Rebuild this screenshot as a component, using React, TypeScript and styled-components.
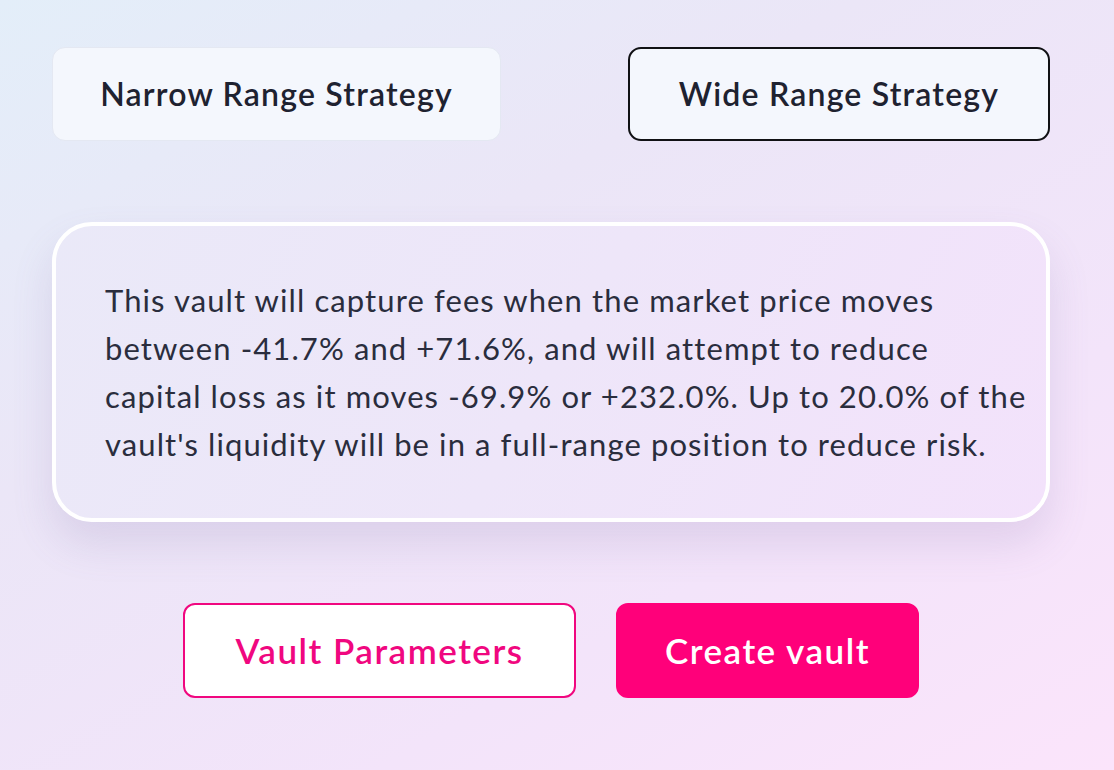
import React, { useState } from 'react';
import styled, { createGlobalStyle } from 'styled-components';

const GlobalStyle = createGlobalStyle`
  * {
    box-sizing: border-box;
  }
  html, body {
    margin: 0;
    padding: 0;
  }
  body {
    font-family: Lato, 'Open Sans', sans-serif;
    background: #eee8f8;
  }
`;

type Strategy = 'narrow' | 'wide';

const App: React.FC = () => {
  const [strategy, setStrategy] = useState<Strategy>('wide');

  return (
    <>
      <GlobalStyle />
      <Page>
        <StrategyRow>
          <StrategyButton
            $active={strategy === 'narrow'}
            $width={449}
            onClick={() => setStrategy('narrow')}
          >
            Narrow Range Strategy
          </StrategyButton>
          <StrategyButton
            $active={strategy === 'wide'}
            $width={422}
            onClick={() => setStrategy('wide')}
          >
            Wide Range Strategy
          </StrategyButton>
        </StrategyRow>

        <InfoCard>
          <InfoText>
            This vault will capture fees when the market price moves between -41.7% and
            +71.6%, and will attempt to reduce capital loss as it moves -69.9% or +232.0%.
            Up to 20.0% of the vault's liquidity will be in a full-range position to reduce
            risk.
          </InfoText>
        </InfoCard>

        <ActionRow>
          <ActionButton $variant="outline" $width={393}>
            Vault Parameters
          </ActionButton>
          <ActionButton $variant="solid" $width={303}>
            Create vault
          </ActionButton>
        </ActionRow>
      </Page>
    </>
  );
};

export default App;

const Page = styled.div`
  width: 1114px;
  height: 770px;
  overflow: hidden;
  padding: 47px 64px 0 52px;
  background: linear-gradient(150deg, #e3eef9 0%, #ebe6f7 35%, #f3e4fa 70%, #fbe4fb 100%);
  display: flex;
  flex-direction: column;
`;

const StrategyRow = styled.div`
  display: flex;
  justify-content: space-between;
  align-items: center;
`;

const StrategyButton = styled.button<{ $active: boolean; $width: number }>`
  width: ${(p) => p.$width}px;
  height: 94px;
  border-radius: 13px;
  background: #f4f7fd;
  border: ${(p) => (p.$active ? '2px solid #101114' : '1px solid #e4e8f2')};
  color: #1e2230;
  font-family: Lato, sans-serif;
  font-size: 32px;
  font-weight: 600;
  letter-spacing: 1.2px;
  padding: 0 0 2px;
  cursor: pointer;
`;

const InfoCard = styled.div`
  margin-top: 81px;
  height: 300px;
  border: 4px solid #ffffff;
  border-radius: 40px;
  background: linear-gradient(120deg, #eae9f8 0%, #eee6f9 50%, #f3e2fb 100%);
  box-shadow: 0 22px 40px rgba(120, 100, 160, 0.16);
  padding: 50px 12px 0 49px;
`;

const InfoText = styled.p`
  margin: 0;
  font-family: Lato, sans-serif;
  font-size: 31px;
  font-weight: 400;
  line-height: 48px;
  color: #2a2d3d;
  letter-spacing: 1.1px;
`;

const ActionRow = styled.div`
  margin-top: 81px;
  display: flex;
  justify-content: center;
  gap: 40px;
`;

const ActionButton = styled.button<{ $variant: 'outline' | 'solid'; $width: number }>`
  width: ${(p) => p.$width}px;
  height: 95px;
  border-radius: 12px;
  font-family: Lato, sans-serif;
  font-size: 35px;
  font-weight: 600;
  letter-spacing: 1.5px;
  padding: 0 0 2px;
  cursor: pointer;
  border: 2px solid #f0077f;
  background: ${(p) => (p.$variant === 'solid' ? '#ff007a' : '#ffffff')};
  color: ${(p) => (p.$variant === 'solid' ? '#ffffff' : '#f0077f')};
  ${(p) => (p.$variant === 'solid' ? 'border-color: #ff007a;' : '')}
`;
